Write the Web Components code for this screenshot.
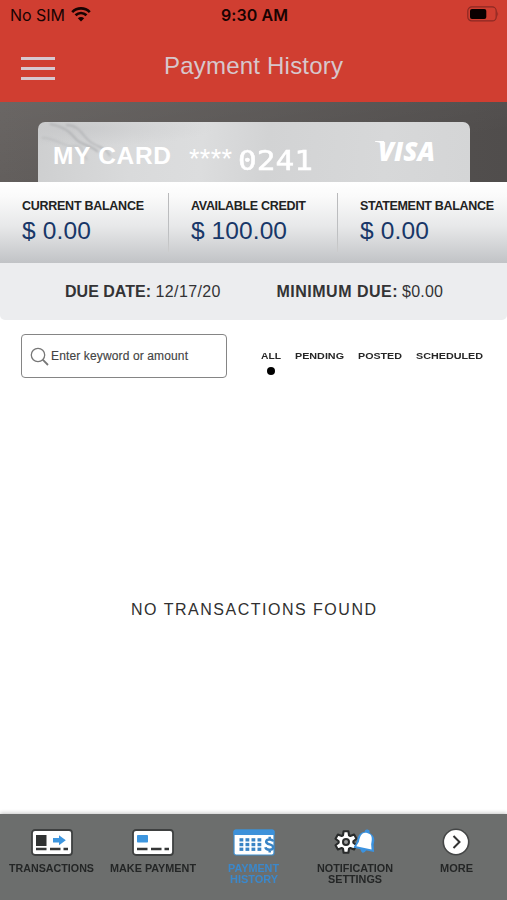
<!DOCTYPE html>
<html lang="en">
<head>
<meta charset="utf-8">
<title>Payment History</title>
<style>
html,body{margin:0;height:100%}
body{font-family:"Liberation Sans",Arial,sans-serif;background:#fff;overflow:hidden}
</style>
</head>
<body>
<payment-app></payment-app>
<script>
const define = (name, html, setup) => customElements.define(name, class extends HTMLElement {
  connectedCallback() {
    if (this.shadowRoot) return;
    this.attachShadow({mode: 'open'}).innerHTML = html;
    if (setup) setup(this, this.shadowRoot);
  }
});

/* One line of text that fills the width given in "w", by tracking or, with "wide", by stretching. */
define('fit-text', `<style>:host{display:block;white-space:nowrap}span{display:inline-block;transform-origin:0 50%}</style><span><slot></slot></span>`, (el, root) => {
  const w = parseFloat(el.getAttribute('w'));
  const span = root.querySelector('span');
  const n = el.textContent.length;
  el.style.width = w + 'px';
  const natural = span.getBoundingClientRect().width;
  if (el.hasAttribute('wide')) span.style.transform = `scaleX(${w / natural})`;
  else span.style.letterSpacing = ((w - natural) / (n - 1)) + 'px';
});

define('status-bar', `<style>
:host{display:grid;grid-template-columns:1fr auto 1fr;align-items:center;height:30px;padding:0 8px 0 10px;color:#180302;font-family:Inter,sans-serif;font-size:16px;line-height:30px}
.l{display:flex;align-items:center;gap:6px}
.t{font-weight:600}
.r{justify-self:end;display:flex;margin-top:-3px}
svg{display:block}
</style>
<div class="l"><fit-text w="55">No SIM</fit-text>
<svg width="20" height="16" viewBox="0 0 20 16" fill="none" stroke="#180302" stroke-width="2.7" style="margin-top:-2px"><path d="M1.2 6.1C6.2 1.2 13.8 1.2 18.8 6.1M4.5 9.3C7.8 6.2 12.2 6.2 15.5 9.3"/><path d="M10 15.6L6.8 12.2C8.7 10.6 11.3 10.6 13.2 12.2Z" fill="#180302" stroke="none"/></svg></div>
<fit-text class="t" w="67">9:30 AM</fit-text>
<div class="r"><svg width="32" height="16" viewBox="0 0 32 16"><rect x=".8" y=".9" width="28.4" height="14" rx="4" fill="none" stroke="#8b2923" stroke-width="1.2"/><rect x="3" y="3" width="16.3" height="10" rx="2" fill="#090000"/><path d="M30.4 5.2Q32 8 30.4 10.7Z" fill="#8b2923"/></svg></div>`);

define('title-bar', `<style>
:host{display:grid;grid-template-columns:1fr auto 1fr;align-items:center;height:72px;box-sizing:border-box;padding:0 21px;color:#d7c7cc;font-size:24px}
.m{width:34px;display:flex;flex-direction:column;gap:7px;margin-top:5px}
.m i{height:3px;background:#d7c7cf}
fit-text{line-height:30px}
</style><div class="m"><i></i><i></i><i></i></div><fit-text w="179">Payment History</fit-text><span></span>`);

define('card-strip', `<style>
:host{display:flex;height:80px;box-sizing:border-box;padding:20px 37px 0 38px;background:linear-gradient(170deg,rgba(255,255,255,.07),transparent 70%),linear-gradient(90deg,#5f5b59,#504d4c)}
.card{position:relative;flex:1;display:flex;align-items:flex-start;border-radius:7px 7px 0 0;overflow:hidden;color:#fff;background:radial-gradient(ellipse at 10% 10%,rgba(190,191,193,.45) 0,transparent 24%),linear-gradient(95deg,#cecfd0 0,#d9dadb 22%,#dcddde 38%,#d2d3d4 53%,#d7d8d9 80%,#d4d5d6)}
.veins{position:absolute;inset:0}
.name{position:relative;font-size:24.5px;font-weight:bold;line-height:28px;margin:20px 0 0 15px}
.stars{position:relative;font-size:27px;line-height:28px;margin:23px 0 0 18px;height:28px}
.num{position:relative;font:400 26px/24px "DejaVu Sans Mono",monospace;-webkit-text-stroke:.5px #fff;margin:27px 0 0 6px}
.visa{position:relative;font:italic 800 26px/26px "Open Sans","Noto Sans",sans-serif;margin:16px 0 0 65px}
.serif{position:absolute;left:337px;top:19px}
</style><div class="card">
<svg class="veins" width="432" height="60" fill="none"><defs><filter id="s"><feGaussianBlur stdDeviation="1"/></filter></defs><g filter="url(#s)" stroke="#999b9e"><path d="M12 2C24 4 31 8 37 16S52 22 60 30" stroke-width="1.7" opacity=".65"/><path d="M28 3C43 3 44 15 54 21S67 25 72 34" stroke-width="1.4" opacity=".65"/><path d="M4 16C18 15 26 26 36 24S44 31 49 38" stroke-width="1.5" opacity=".35"/></g></svg>
<fit-text class="name" w="118">MY CARD</fit-text><fit-text class="stars" w="43">****</fit-text><fit-text wide class="num" w="75">0241</fit-text>
<fit-text class="visa" w="57">VISA</fit-text><svg class="serif" width="10" height="5"><path d="M0 0H9L10 5C8 2.500 4 1.200 0 .8Z" fill="#fff"/></svg></div>`);

define('balance-cell', `<style>
:host{display:block;box-sizing:border-box;padding:16px 0 0 22px;color:#222}
.t{font-size:12.5px;font-weight:bold;line-height:16px}
.v{font-size:24.5px;line-height:32px;margin-top:1px;color:#183768}
</style>`, (el, root) => {
  const [t, tw, v, vw] = el.getAttribute('data').split('|');
  const make = (cls, text, w) => `<fit-text class="${cls}" w="${w}">${text}</fit-text>`;
  root.innerHTML += make('t', t, tw) + make('v', v, vw);
});

define('balance-row', `<style>
:host{display:grid;grid-template-columns:168px 1px 168px 1px 169px;height:81px;background:linear-gradient(#fff 0,#fafafa 18%,#e7e8e9 55%,#c1c3c6 100%)}
i{height:59px;margin-top:11px;background:linear-gradient(#b9b9bb,#bec0c2 70%,#ccc)}
</style>
<balance-cell data="CURRENT BALANCE|122|$ 0.00|69"></balance-cell><i></i>
<balance-cell data="AVAILABLE CREDIT|115|$ 100.00|96"></balance-cell><i></i>
<balance-cell data="STATEMENT BALANCE|134|$ 0.00|69"></balance-cell>`);

define('due-row', `<style>
:host{display:flex;align-items:center;gap:56px;height:57px;box-sizing:border-box;padding-left:65px;background:#ecedef;border-radius:0 0 5px 5px;color:#333335;font-size:16px;line-height:20px}
div{display:flex;gap:4.5px}.b{font-weight:bold}
</style><div><fit-text class="b" w="86">DUE DATE:</fit-text><fit-text w="65">12/17/20</fit-text></div>
<div><fit-text class="b" w="121">MINIMUM DUE:</fit-text><fit-text w="41">$0.00</fit-text></div>`);

define('search-box', `<style>
:host{display:flex;align-items:center;box-sizing:border-box;width:206px;height:44px;padding-left:8px;gap:1px;border:1px solid #858585;border-radius:4px;color:#444;font-size:12px;background:#fff}
svg{display:block;margin-top:2px}
</style><svg width="20" height="20" viewBox="0 0 20 20" fill="none" stroke="#777"><circle cx="8" cy="8" r="6.7" stroke-width="1.3"/><path d="M12.7 12.7L18 18" stroke-width="1.8"/></svg><fit-text w="137" style="-webkit-text-stroke:.15px #444">Enter keyword or amount</fit-text>`);

define('filter-tabs', `<style>
:host{display:flex;gap:14px;color:#262626;font-size:9.8px;font-weight:bold;line-height:14px}
div{display:flex;flex-direction:column;align-items:center;gap:4px}
i{width:8px;height:8px;border-radius:50%;background:#000}
</style><div><fit-text wide w="20">ALL</fit-text><i></i></div><fit-text wide w="49">PENDING</fit-text><fit-text wide w="44">POSTED</fit-text><fit-text wide w="67">SCHEDULED</fit-text>`);

const icons = {
  card: extra => `<svg width="42" height="27" viewBox="0 0 42 27"><rect x="1" y="1" width="40" height="25" rx="3" fill="#fff" stroke="#3e4040" stroke-width="1.8"/><path d="M5 20H15.5M19 20H29.5M32.5 20H37" stroke="#353737" stroke-width="2.4"/>${extra}</svg>`,
  gear() {
    let d = '';
    for (let i = 0; i < 6; i++) {
      const a = i * Math.PI / 3;
      for (const [r, o] of [[7.4, -.42], [11, -.22], [11, .22], [7.4, .42]])
        d += (d ? 'L' : 'M') + (12 + r * Math.sin(a + o)).toFixed(2) + ' ' + (13 - r * Math.cos(a + o)).toFixed(2);
    }
    return `<svg width="42" height="27" viewBox="0 0 42 27"><path d="${d}Z" fill="#fff" stroke="#292b2b" stroke-width="2.1" stroke-linejoin="round"/><circle cx="12" cy="13" r="3" fill="#999" stroke="#292b2b" stroke-width="2"/><g transform="rotate(12 31 13)"><path d="M27.5 20H34.5Q31 28 27.5 20Z" fill="#3b92df"/><path d="M31 .3A2.5 2.5 0 0 1 33.500 3C40 5.500 40 9 40 14L42 21H21L23 14C23 9 23 5.500 28.500 3A2.500 2.500 0 0 1 31 .3Z" fill="#3b92df"/><path d="M31.200 3.800C37.200 3.800 37.400 9 37.500 14L39 19H23.300L25 14C25 9 25.200 3.800 31.200 3.800Z" fill="#fff"/></g></svg>`;
  }
};
const iconOf = {
  transactions: () => icons.card('<rect x="5" y="6" width="10.5" height="11" fill="#303232"/><path d="M22 9H28V6.300L34.800 11.300L28 16.300V13.600H22Z" fill="#3d96df"/>'),
  pay: () => icons.card('<rect x="5" y="6" width="11" height="7.5" rx=".8" fill="#3d96df"/>'),
  history: () => {
    let dots = '';
    for (let r = 0; r < 3; r++) for (let c = 0; c < 4; c++) dots += `<rect x="${6.5 + c * 6}" y="${9.2 + r * 4.7}" width="3.8" height="3.3"/>`;
    return `<svg width="42" height="27" viewBox="0 0 42 27"><rect x="1" y="1" width="40" height="25" rx="2" fill="#fff" stroke="#3d8dce" stroke-width="1.2"/><path d="M.5 6V2.5Q.5.5 2.5.5H39.5Q41.5.5 41.5 2.5V6Z" fill="#3c91da"/><g fill="#3984c5">${dots}</g><path d="M40.2 12.500C39.4 9.800 33.4 9.500 33.200 12.700C33.200 16.300 40.300 14.500 40.200 18.300C39.800 21.700 33 21.500 32.4 18.300M36.7 7.8V10.500M36.700 20.500V23.500" fill="none" stroke="#3984c5" stroke-width="2.5"/></svg>`;
  },
  settings: icons.gear,
  more: () => `<svg width="28" height="28" viewBox="0 0 28 28"><circle cx="14" cy="14" r="12.7" fill="#fff" stroke="#444646" stroke-width="1.6"/><path d="M11.500 8L17.500 14L11.500 20" fill="none" stroke="#333" stroke-width="2"/></svg>`
};
define('nav-item', `<style>
:host{display:flex;flex-direction:column;align-items:center;color:#242626;font-size:10px;font-weight:bold;line-height:11px}
:host([active]){color:#3b88cb}
.icon{height:28px;display:flex;align-items:center;margin-bottom:7px}svg{display:block}
</style><div class="icon"></div><div class="lines"></div>`, (el, root) => {
  root.querySelector('.icon').innerHTML = iconOf[el.getAttribute('icon')]();
  root.querySelector('.lines').innerHTML = el.getAttribute('lines').split(';').map(s => {
    const [t, w] = s.split('|');
    return `<fit-text wide style="margin:0 auto" w="${w}">${t}</fit-text>`;
  }).join('');
});

define('bottom-nav', `<style>
:host{display:grid;grid-template-columns:repeat(5,101.2px);box-sizing:border-box;height:86px;padding:14px 0 0 1px;background:#6c6e6d;box-shadow:0 -1px 4px rgba(0,0,0,.22)}
</style>
<nav-item icon="transactions" lines="TRANSACTIONS|85"></nav-item>
<nav-item icon="pay" lines="MAKE PAYMENT|86"></nav-item>
<nav-item icon="history" active lines="PAYMENT|51;HISTORY|48"></nav-item>
<nav-item icon="settings" lines="NOTIFICATION|76;SETTINGS|54"></nav-item>
<nav-item icon="more" lines="MORE|33"></nav-item>`);

define('payment-app', `<style>
:host{display:flex;flex-direction:column;height:900px;width:507px}
header{background:#d03e31}
.filters{display:flex;align-items:flex-start;gap:34px;padding:14px 0 0 21px;height:44px}
filter-tabs{margin-top:15px}
main{flex:1;display:flex;justify-content:center;align-items:flex-start;padding-top:222px;box-sizing:border-box;color:#303030;font-size:16px;line-height:20px}
</style>
<header><status-bar></status-bar><title-bar></title-bar></header>
<card-strip></card-strip><balance-row></balance-row><due-row></due-row>
<div class="filters"><search-box></search-box><filter-tabs></filter-tabs></div>
<main><fit-text w="245">NO TRANSACTIONS FOUND</fit-text></main>
<bottom-nav></bottom-nav>`);
</script>
</body>
</html>
